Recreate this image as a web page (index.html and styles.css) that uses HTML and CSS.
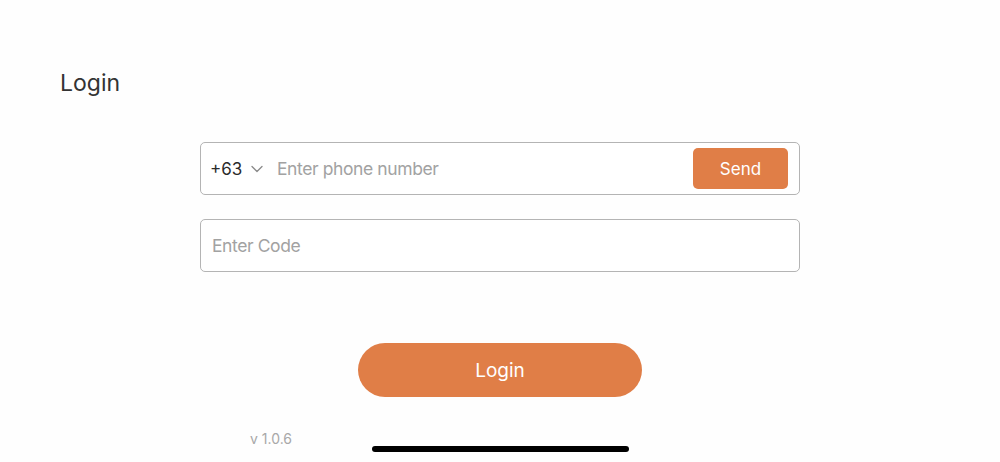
FILE: index.html
```html
<!DOCTYPE html>
<html lang="en">
<head>
    <meta charset="UTF-8">
    <meta name="viewport" content="width=device-width, initial-scale=1.0">
    <title>Login</title>
    <link rel="stylesheet" href="styles.css">
</head>
<body>

<div class="screen">
    <h1 class="title">Login</h1>

    <form class="form">
        <div class="field phone">
            <div class="country">
                <span>+63</span>
                <svg width="12" height="8" viewBox="0 0 12 8">
                    <path d="M1 1.5 L6 6.5 L11 1.5" fill="none" stroke="#8a8a8a" stroke-width="1.3" stroke-linecap="round" stroke-linejoin="round"/>
                </svg>
            </div>
            <input type="text" placeholder="Enter phone number">
            <button type="button" class="send">Send</button>
        </div>
        <div class="field">
            <input type="text" class="code" placeholder="Enter Code">
        </div>
    </form>

    <button type="button" class="login">Login</button>

    <p class="version">v 1.0.6</p>

    <div class="home-bar"></div>
</div>

</body>
</html>
```

FILE: styles.css
```css
body {
    margin: 0;
    padding: 0;
    font-family: Inter, "Open Sans", sans-serif;
    background: #fefefe;
    overflow: hidden;
}
.screen {
    position: relative;
    height: 462px;
    display: flex;
    flex-direction: column;
}
.title {
    margin: 68px 0 0 60px;
    font-size: 23px;
    font-weight: 400;
    color: #333;
    line-height: 30px;
}
.form {
    width: 600px;
    margin: 44px auto 0;
    display: flex;
    flex-direction: column;
    gap: 24px;
}
.field {
    height: 53px;
    box-sizing: border-box;
    border: 1.5px solid #b4b4b4;
    border-radius: 5px;
    display: flex;
    align-items: center;
    background: #fff;
}
.country {
    display: flex;
    align-items: center;
    gap: 9px;
    padding-left: 9px;
    font-size: 17px;
    color: #2b2b2b;
    width: 67px;
}
.field input {
    flex: 1;
    border: none;
    outline: none;
    background: transparent;
    font-family: inherit;
    font-size: 17.5px;
    letter-spacing: -0.4px;
    color: #2b2b2b;
    padding: 0;
    min-width: 0;
}
.field input::placeholder {
    color: #a2a2a2;
}
.field .code {
    padding-left: 11px;
}
.send {
    width: 95px;
    height: 41px;
    margin-right: 11px;
    border: none;
    border-radius: 5px;
    background: #e07e47;
    color: #fff;
    font-family: inherit;
    font-size: 17px;
}
.login {
    align-self: center;
    width: 284px;
    height: 54px;
    margin-top: 71px;
    border: none;
    border-radius: 27px;
    background: #e07e47;
    color: #fff;
    font-family: inherit;
    font-size: 19px;
}
.version {
    margin: 33px 0 0 250px;
    font-size: 14px;
    color: #a8a8a8;
}
.home-bar {
    position: absolute;
    left: 372px;
    top: 446px;
    width: 257px;
    height: 6px;
    border-radius: 3px;
    background: #000;
}
```
